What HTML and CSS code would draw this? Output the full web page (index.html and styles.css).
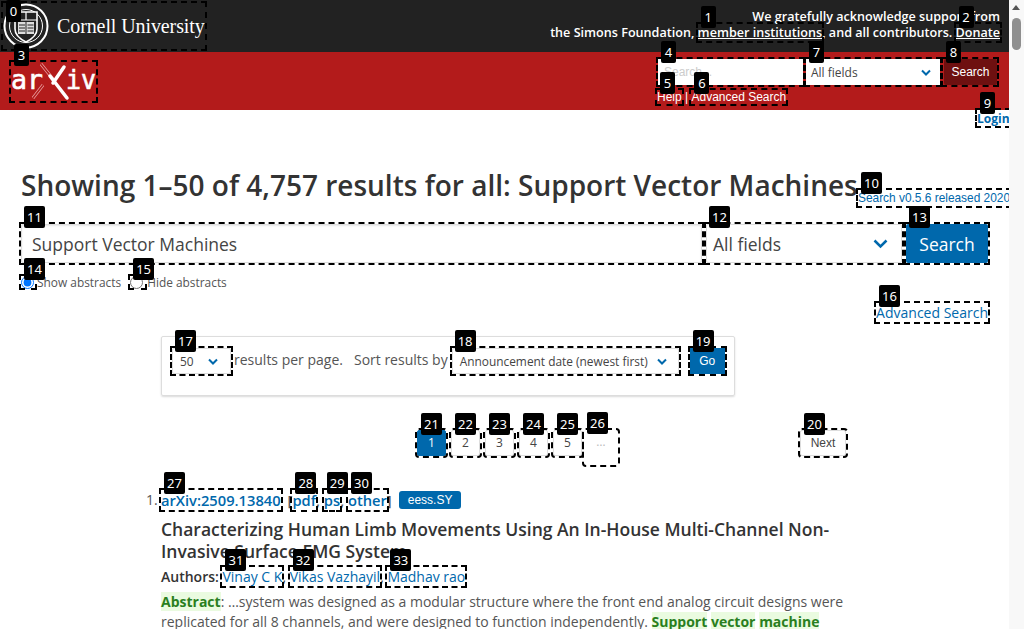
FILE: index.html
```html
<!DOCTYPE html>
<html lang="en">
<head>
    <meta charset="UTF-8">
    <title>Search | arXiv e-print repository</title>
    <link rel="stylesheet" href="styles.css">
</head>
<body>
<div class="page">
    <div class="content">
        <!-- 顶部黑条 -->
        <div class="topbar">
            <a class="mark cornell" href="#"><span class="tag tag-top">0</span>
                <svg class="seal" width="46" height="46" viewBox="0 0 46 46">
                    <circle cx="23" cy="23" r="21.5" fill="none" stroke="#fff" stroke-width="2"/>
                    <circle cx="23" cy="23" r="16.5" fill="none" stroke="#fff" stroke-width="1"/>
                    <path d="M12 9h22v17c0 6-5 10-11 13-6-3-11-7-11-13z" fill="#222" stroke="#fff" stroke-width="1.6"/>
                    <path d="M12 17h22M23 9v8" stroke="#fff" stroke-width="1.2"/>
                    <path d="M15 19h7.500v12h-7.500zM23.500 19h7.500v12h-7.500z" fill="#ddd"/>
                    <path d="M16 22h6M16 25h6M16 28h6M24.500 22h6M24.500 25h6M24.500 28h6" stroke="#222" stroke-width="1"/>
                </svg>
                <span class="cornell-name">Cornell University</span>
            </a>
            <div class="thanks">
                <div>We gratefully acknowledge support from</div>
                <div>the Simons Foundation, <a class="mark" href="#"><span class="tag">1</span>member institutions</a>, and all contributors. <a class="mark" href="#"><span class="tag">2</span>Donate</a></div>
            </div>
        </div>

        <!-- 红色条 -->
        <div class="redbar">
            <a class="mark arxiv" href="#"><span class="tag">3</span>
                <svg width="86" height="40" viewBox="0 0 86 40">
                    <text class="logo-text" x="1" y="27" textLength="32" lengthAdjust="spacingAndGlyphs">ar</text>
                    <text class="logo-text" x="56" y="27" textLength="30" lengthAdjust="spacingAndGlyphs">iv</text>
                    <path d="M31 2l12 15M33 23L23 36" fill="none" stroke="#e8a0a0" stroke-width="3"/>
                    <path d="M31 2l12 15M33 23L23 36" fill="none" stroke="#b31b1b" stroke-width="1.500"/>
                    <path d="M54 5L43 21" stroke="#fff" stroke-width="3.500" stroke-linecap="round"/>
                    <path d="M40 14L57 36" stroke="#fff" stroke-width="3.500" stroke-linecap="round"/>
                </svg>
            </a>
            <div class="mini-search">
                <div class="mini-row">
                    <span class="mark"><span class="tag">4</span><input class="mini-input" type="text" placeholder="Search..."></span>
                    <span class="mark"><span class="tag">7</span>
                        <span class="mini-select">All fields
                            <svg class="chev" width="10" height="7" viewBox="0 0 10 7"><path d="M1 1.500l4 4 4-4" fill="none" stroke="#0068ac" stroke-width="2"/></svg>
                        </span>
                    </span>
                    <span class="mark"><span class="tag">8</span><button class="mini-btn" type="button">Search</button></span>
                </div>
                <div class="mini-links">
                    <a class="mark" href="#"><span class="tag">5</span>Help</a> | <a class="mark" href="#"><span class="tag">6</span>Advanced Search</a>
                </div>
            </div>
        </div>

        <div class="login-row">
            <a class="mark login" href="#"><span class="tag">9</span>Login</a>
        </div>

        <div class="heading-row">
            <h1>Showing 1–50 of 4,757 results for all: Support Vector Machines</h1>
            <a class="mark version" href="#"><span class="tag">10</span>Search v0.5.6 released 2020</a>
        </div>

        <!-- 搜索框 -->
        <div class="search-form">
            <span class="mark term"><span class="tag">11</span><input class="big-input" type="text" value="Support Vector Machines"></span>
            <span class="mark field"><span class="tag">12</span>
                <span class="big-select">All fields
                    <svg width="15" height="10" viewBox="0 0 15 10"><path d="M1.500 1.500l6 6 6-6" fill="none" stroke="#0068ac" stroke-width="2.500"/></svg>
                </span>
            </span>
            <span class="mark"><span class="tag">13</span><button class="big-btn" type="button">Search</button></span>
        </div>

        <div class="radios">
            <span class="mark radio-mark"><span class="tag">14</span><input class="radio" type="radio" name="abs" checked></span>
            <label class="radio-label">Show abstracts</label>
            <span class="mark radio-mark second"><span class="tag">15</span><input class="radio" type="radio" name="abs"></span>
            <label class="radio-label">Hide abstracts</label>
        </div>

        <div class="adv-row">
            <a class="mark" href="#"><span class="tag">16</span>Advanced Search</a>
        </div>

        <div class="column">
            <!-- 排序 -->
            <div class="sort-panel">
                <span class="mark"><span class="tag">17</span>
                    <span class="small-select per-page">50
                        <svg width="10" height="7" viewBox="0 0 10 7"><path d="M1 1.500l4 4 4-4" fill="none" stroke="#0068ac" stroke-width="2"/></svg>
                    </span>
                </span>
                <span class="sort-text">results per page.</span>
                <span class="sort-text sort-by">Sort results by</span>
                <span class="mark"><span class="tag">18</span>
                    <span class="small-select sort-order">Announcement date (newest first)
                        <svg width="10" height="7" viewBox="0 0 10 7"><path d="M1 1.500l4 4 4-4" fill="none" stroke="#0068ac" stroke-width="2"/></svg>
                    </span>
                </span>
                <span class="mark go"><span class="tag">19</span><button class="go-btn" type="button">Go</button></span>
            </div>

            <!-- 分页 -->
            <div class="pager">
                <a class="mark pg current" href="#"><span class="tag">21</span>1</a>
                <a class="mark pg" href="#"><span class="tag">22</span>2</a>
                <a class="mark pg" href="#"><span class="tag">23</span>3</a>
                <a class="mark pg" href="#"><span class="tag">24</span>4</a>
                <a class="mark pg" href="#"><span class="tag">25</span>5</a>
                <span class="mark pg dots"><span class="tag">26</span>…</span>
                <a class="mark pg next" href="#"><span class="tag">20</span>Next</a>
            </div>

            <!-- 结果 -->
            <ol class="results">
                <li>
                    <div class="result-head">
                        <a class="mark" href="#"><span class="tag">27</span>arXiv:2509.13840</a>
                        <span class="links">[<a class="mark" href="#"><span class="tag">28</span>pdf</a>, <a class="mark" href="#"><span class="tag">29</span>ps</a>, <a class="mark" href="#"><span class="tag">30</span>other</a>]</span>
                        <span class="subject">eess.SY</span>
                    </div>
                    <p class="title">Characterizing Human Limb Movements Using An In-House Multi-Channel Non-Invasive Surface EMG System</p>
                    <p class="authors"><b>Authors:</b> <a class="mark" href="#"><span class="tag">31</span>Vinay C K</a>, <a class="mark" href="#"><span class="tag">32</span>Vikas Vazhayil</a>, <a class="mark" href="#"><span class="tag">33</span>Madhav rao</a></p>
                    <p class="abstract"><b class="hl">Abstract</b>: …system was designed as a modular structure where the front end analog circuit designs were replicated for all 8 channels, and were designed to function independently. <b class="hl">Support</b> <b class="hl">vector</b> <b class="hl">machine</b></p>
                </li>
            </ol>
        </div>
    </div>

    <!-- 滚动条 -->
    <div class="scrollbar">
        <div class="scroll-up"></div>
        <div class="scroll-thumb"></div>
    </div>
</div>
</body>
</html>
```

FILE: styles.css
```css
* {
    margin: 0;
    padding: 0;
    box-sizing: border-box;
}

html, body {
    height: 629px;
    overflow: hidden;
}

body {
    background: #fff;
    color: #333;
    font-family: "Open Sans", "Noto Sans", sans-serif;
    font-size: 14px;
}

a {
    color: #0068ac;
    text-decoration: none;
}

.page {
    display: flex;
    height: 629px;
}

.content {
    width: 1009px;
    flex: none;
    overflow: hidden;
}

/* numbered overlay */
.mark {
    position: relative;
    outline: 2px dashed #000;
}

.tag {
    position: absolute;
    top: -18px;
    left: 3px;
    z-index: 5;
    height: 22px;
    min-width: 15px;
    padding: 0 3px;
    background: #000;
    border-radius: 2px;
    color: #fff;
    font-family: "Noto Sans", sans-serif;
    font-size: 13px;
    font-weight: 400;
    line-height: 22px;
    text-align: center;
    white-space: nowrap;
    text-decoration: none;
}

.tag-top {
    top: -3px;
}

.topbar {
    display: flex;
    justify-content: space-between;
    height: 52px;
    padding: 3px 9px 0 3px;
    background: #222;
}

.cornell {
    display: flex;
    align-items: center;
    width: 202px;
    height: 46px;
    color: #fff;
}

.seal {
    flex: none;
}

.cornell-name {
    margin-left: 8px;
    font-family: "Liberation Serif", serif;
    font-size: 20px;
    letter-spacing: -.1px;
    white-space: nowrap;
}

.thanks {
    padding-top: 6px;
    color: #fff;
    font-size: 12.6px;
    font-weight: 600;
    line-height: 16px;
    text-align: right;
}

.thanks a {
    color: #fff;
    text-decoration: underline;
}

.redbar {
    display: flex;
    justify-content: space-between;
    height: 58px;
    padding: 10px 11px 0 11px;
    background: #b31b1b;
}

.arxiv {
    display: block;
    width: 85px;
    height: 39px;
}

.arxiv svg {
    display: block;
    margin-left: -1px;
}

.logo-text {
    fill: #fff;
    stroke: #fff;
    stroke-width: .6px;
    font-family: "DejaVu Sans Mono", monospace;
    font-size: 27px;
    font-weight: 400;
}

.mini-search {
    width: 340px;
    margin-top: -3px;
}

.mini-row {
    display: flex;
    gap: 3px;
}

.mini-row .mark {
    display: block;
}

.mini-input {
    display: block;
    width: 145px;
    height: 26px;
    padding: 0 6px;
    border: 0;
    font-family: "Liberation Sans", sans-serif;
    font-size: 12px;
}

.mini-input::placeholder {
    color: #ccc;
}

.mini-select {
    display: flex;
    align-items: center;
    justify-content: space-between;
    width: 134px;
    height: 26px;
    padding: 0 9px 0 5px;
    background: #fff;
    color: #444;
    font-size: 12px;
}

.mini-btn {
    display: block;
    width: 53px;
    height: 26px;
    margin-left: 1px;
    border: 0;
    border-radius: 2px;
    background: #6e1010;
    color: #fff;
    font-family: "Liberation Sans", sans-serif;
    font-size: 12px;
}

.mini-links {
    margin: 5px 0 0 -1px;
    color: #fff;
    font-family: "Liberation Sans", sans-serif;
    font-size: 12px;
    line-height: 14px;
}

.mini-links a {
    color: #fff;
}

.login-row {
    display: flex;
    justify-content: flex-end;
    height: 16px;
    line-height: 18px;
}

.login {
    display: block;
    width: 32px;
    font-size: 12px;
    font-weight: 700;
}

.heading-row {
    display: flex;
    align-items: flex-end;
    margin-top: 41px;
    padding-left: 21px;
    height: 37px;
}

h1 {
    flex: none;
    width: 837px;
    font-size: 28px;
    font-weight: 600;
    line-height: 37px;
    white-space: nowrap;
}

.version {
    display: block;
    margin: 0 0 -2px 0;
    font-family: "Liberation Sans", sans-serif;
    font-size: 11.9px;
    line-height: 16px;
    white-space: nowrap;
}

.search-form {
    display: flex;
    gap: 4px;
    margin-top: 20px;
    padding-left: 21px;
}

.search-form .mark {
    display: block;
}

.big-input {
    display: block;
    width: 681px;
    height: 39px;
    padding: 0 10px;
    border: 1px solid #ddd;
    border-radius: 2px;
    box-shadow: inset 0 1px 2px rgba(0, 0, 0, .1);
    color: #444;
    font-family: "Open Sans", sans-serif;
    font-size: 17.5px;
}

.big-select {
    display: flex;
    align-items: center;
    justify-content: space-between;
    width: 196px;
    height: 39px;
    padding: 0 13px 0 6px;
    border: 1px solid #ddd;
    border-radius: 2px;
    color: #444;
    font-size: 17.5px;
}

.big-btn {
    display: block;
    width: 82px;
    height: 39px;
    border: 0;
    border-radius: 2px;
    background: #0068ac;
    color: #fff;
    font-family: "Open Sans", sans-serif;
    font-size: 17.5px;
}

.radios {
    display: flex;
    align-items: center;
    height: 16px;
    margin-top: 11px;
    padding-left: 21px;
    color: #555;
    font-size: 11.9px;
}

.radio-mark {
    display: block;
    width: 14px;
    height: 12px;
}

.radio-mark.second {
    width: 15px;
    margin-left: 9px;
}

.radio {
    display: block;
    width: 13px;
    height: 13px;
    margin: 0;
}

.radio-label {
    margin-left: 2px;
}

.adv-row {
    display: flex;
    justify-content: flex-end;
    margin-top: 13px;
    padding-right: 21px;
    line-height: 19px;
}

.column {
    width: 700px;
    margin-left: 161px;
}

.sort-panel {
    display: flex;
    align-items: flex-start;
    width: 574px;
    height: 60px;
    margin-top: 14px;
    padding: 11px 10px;
    border: 1px solid #ddd;
    border-radius: 2px;
    box-shadow: 0 1px 2px rgba(0, 0, 0, .15);
    color: #555;
    font-size: 14px;
}

.sort-panel .mark {
    display: block;
}

.small-select {
    display: flex;
    align-items: center;
    justify-content: space-between;
    height: 26px;
    padding: 0 11px 0 7px;
    border: 1px solid #ddd;
    border-radius: 2px;
    color: #444;
    font-size: 11.9px;
}

.per-page {
    width: 59px;
    padding-right: 12px;
}

.sort-order {
    width: 227px;
}

.sort-text {
    margin-left: 3px;
    line-height: 23px;
    white-space: nowrap;
}

.sort-by {
    margin-left: 11px;
    margin-right: 4px;
}

.go {
    margin-left: 11px;
}

.go-btn {
    display: block;
    width: 35px;
    height: 26px;
    border: 0;
    background: #0068ac;
    color: #fff;
    font-family: "Liberation Sans", sans-serif;
    font-size: 12px;
}

.pager {
    display: flex;
    align-items: flex-start;
    gap: 5px;
    margin-top: 34px;
    padding-left: 256px;
}

.pg {
    display: block;
    width: 29px;
    height: 26px;
    border: 1px solid #ddd;
    border-radius: 2px;
    color: #444;
    font-size: 12px;
    line-height: 24px;
    text-align: center;
}

.pg.current {
    border-color: #0068ac;
    background: #0068ac;
    color: #fff;
}

.pg.dots {
    width: 34px;
    height: 35px;
    margin-left: -3px;
    border: 0;
    color: #bbb;
}

.pg.next {
    width: 46px;
    margin-left: 177px;
    font-family: "Liberation Sans", sans-serif;
    font-size: 12px;
}

.results {
    margin-top: 26px;
    color: #555;
    font-size: 14px;
}

.result-head {
    display: flex;
    align-items: center;
    height: 18px;
    font-size: 14.7px;
    font-weight: 600;
}

.links {
    margin-left: 7px;
    white-space: pre;
}

.subject {
    margin-left: 7px;
    padding: 0 9px;
    height: 18px;
    border-radius: 3px;
    background: #0068ac;
    color: #fff;
    font-family: "Liberation Sans", sans-serif;
    font-size: 12px;
    font-weight: 400;
    line-height: 18px;
}

.title {
    margin-top: 9px;
    color: #333;
    font-size: 17.5px;
    font-weight: 600;
    line-height: 22px;
}

.authors {
    margin-top: 5px;
    color: #333;
    line-height: 20px;
}

.authors b {
    font-weight: 600;
}

.abstract {
    margin-top: 5px;
    line-height: 20px;
}

.hl {
    background: #eafbe0;
    color: #2a7f1e;
    font-weight: 700;
}

ol {
    list-style: none;
}

.results li {
    position: relative;
}

.results li::before {
    content: "1.";
    position: absolute;
    top: -1px;
    left: -15px;
}

.scrollbar {
    width: 15px;
    flex: none;
    background: #f8f8f8;
}

.scroll-up {
    width: 0;
    height: 0;
    margin: 5px 0 0 3px;
    border-left: 4px solid transparent;
    border-right: 4px solid transparent;
    border-bottom: 5px solid #555;
}

.scroll-thumb {
    width: 9px;
    height: 32px;
    margin: 8px 0 0 3px;
    border-radius: 5px;
    background: #8f8f8f;
}
```
